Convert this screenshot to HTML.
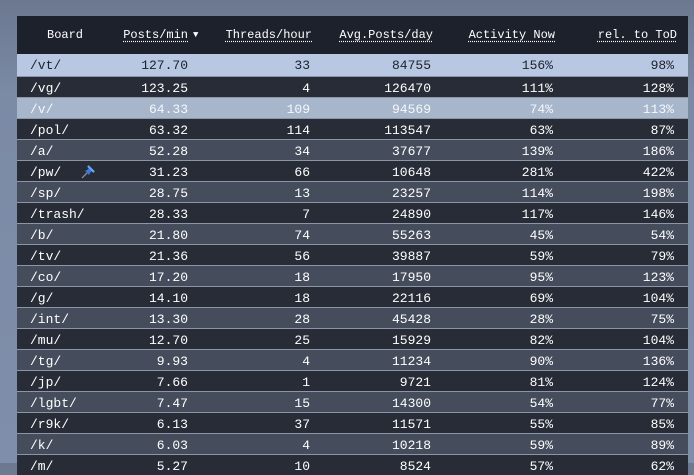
<!DOCTYPE html>
<html><head><style>
html,body{margin:0;padding:0;width:694px;height:463px;overflow:hidden;background:linear-gradient(180deg,#6b7890 0%,#7b8aa5 20%,#7f8eaa 100%);}
.t{position:absolute;left:17px;top:16px;width:671px;background:#272c36;font-family:"Liberation Mono",monospace;}
.h{height:38px;background:#1c212b;position:relative;color:#fff;font-size:12px;}
.h span{position:absolute;top:12px;text-decoration:underline dotted;text-underline-offset:3px}
.r{height:20px;border-top:1px solid #8d96a6;position:relative;font-size:13px;color:#fff;}
.r span{position:absolute;top:4px}
.r .b{left:13px}
.c1{right:500px}.c2{right:378px}.c3{right:257px}.c4{right:135px}.c5{right:14px}
.hl1{background:#b9c8e2!important;color:#1c212b}
.hl2{background:#a8b6cc!important;color:#f4f7fc}
</style></head><body>
<div class="t">
<div class="h"><span style="left:30px;text-decoration:none">Board</span><span style="right:500px">Posts/min</span><span style="left:176px;top:14px;text-decoration:none;font-size:9px">▼</span><span style="right:376px">Threads/hour</span><span style="right:255px">Avg.Posts/day</span><span style="right:133px">Activity Now</span><span style="right:11px">rel. to ToD</span></div>
<div class="r hl1" style="border-top:none;height:22px"><span class="b">/vt/</span><span class="c1">127.70</span><span class="c2">33</span><span class="c3">84755</span><span class="c4">156%</span><span class="c5">98%</span></div>
<div class="r" style="background:#272c36"><span class="b">/vg/</span><span class="c1">123.25</span><span class="c2">4</span><span class="c3">126470</span><span class="c4">111%</span><span class="c5">128%</span></div>
<div class="r hl2"><span class="b">/v/</span><span class="c1">64.33</span><span class="c2">109</span><span class="c3">94569</span><span class="c4">74%</span><span class="c5">113%</span></div>
<div class="r" style="background:#272c36"><span class="b">/pol/</span><span class="c1">63.32</span><span class="c2">114</span><span class="c3">113547</span><span class="c4">63%</span><span class="c5">87%</span></div>
<div class="r" style="background:#454d5c"><span class="b">/a/</span><span class="c1">52.28</span><span class="c2">34</span><span class="c3">37677</span><span class="c4">139%</span><span class="c5">186%</span></div>
<div class="r" style="background:#272c36"><span class="b">/pw/</span><svg style="position:absolute;left:63px;top:3px" width="16" height="16" viewBox="0 0 16 16"><path d="M2 14L7 9" stroke="#999" stroke-width="1.2"/><path d="M5 7L9 11L10 9L12 7L9 4L7 6Z" fill="#3a78d8"/><path d="M8.5 2.5L13.5 7.5" stroke="#6aa6f4" stroke-width="2.2" stroke-linecap="round"/></svg><span class="c1">31.23</span><span class="c2">66</span><span class="c3">10648</span><span class="c4">281%</span><span class="c5">422%</span></div>
<div class="r" style="background:#454d5c"><span class="b">/sp/</span><span class="c1">28.75</span><span class="c2">13</span><span class="c3">23257</span><span class="c4">114%</span><span class="c5">198%</span></div>
<div class="r" style="background:#272c36"><span class="b">/trash/</span><span class="c1">28.33</span><span class="c2">7</span><span class="c3">24890</span><span class="c4">117%</span><span class="c5">146%</span></div>
<div class="r" style="background:#454d5c"><span class="b">/b/</span><span class="c1">21.80</span><span class="c2">74</span><span class="c3">55263</span><span class="c4">45%</span><span class="c5">54%</span></div>
<div class="r" style="background:#272c36"><span class="b">/tv/</span><span class="c1">21.36</span><span class="c2">56</span><span class="c3">39887</span><span class="c4">59%</span><span class="c5">79%</span></div>
<div class="r" style="background:#454d5c"><span class="b">/co/</span><span class="c1">17.20</span><span class="c2">18</span><span class="c3">17950</span><span class="c4">95%</span><span class="c5">123%</span></div>
<div class="r" style="background:#272c36"><span class="b">/g/</span><span class="c1">14.10</span><span class="c2">18</span><span class="c3">22116</span><span class="c4">69%</span><span class="c5">104%</span></div>
<div class="r" style="background:#454d5c"><span class="b">/int/</span><span class="c1">13.30</span><span class="c2">28</span><span class="c3">45428</span><span class="c4">28%</span><span class="c5">75%</span></div>
<div class="r" style="background:#272c36"><span class="b">/mu/</span><span class="c1">12.70</span><span class="c2">25</span><span class="c3">15929</span><span class="c4">82%</span><span class="c5">104%</span></div>
<div class="r" style="background:#454d5c"><span class="b">/tg/</span><span class="c1">9.93</span><span class="c2">4</span><span class="c3">11234</span><span class="c4">90%</span><span class="c5">136%</span></div>
<div class="r" style="background:#272c36"><span class="b">/jp/</span><span class="c1">7.66</span><span class="c2">1</span><span class="c3">9721</span><span class="c4">81%</span><span class="c5">124%</span></div>
<div class="r" style="background:#454d5c"><span class="b">/lgbt/</span><span class="c1">7.47</span><span class="c2">15</span><span class="c3">14300</span><span class="c4">54%</span><span class="c5">77%</span></div>
<div class="r" style="background:#272c36"><span class="b">/r9k/</span><span class="c1">6.13</span><span class="c2">37</span><span class="c3">11571</span><span class="c4">55%</span><span class="c5">85%</span></div>
<div class="r" style="background:#454d5c"><span class="b">/k/</span><span class="c1">6.03</span><span class="c2">4</span><span class="c3">10218</span><span class="c4">59%</span><span class="c5">89%</span></div>
<div class="r" style="background:#272c36"><span class="b">/m/</span><span class="c1">5.27</span><span class="c2">10</span><span class="c3">8524</span><span class="c4">57%</span><span class="c5">62%</span></div>
</div>
</body></html>
